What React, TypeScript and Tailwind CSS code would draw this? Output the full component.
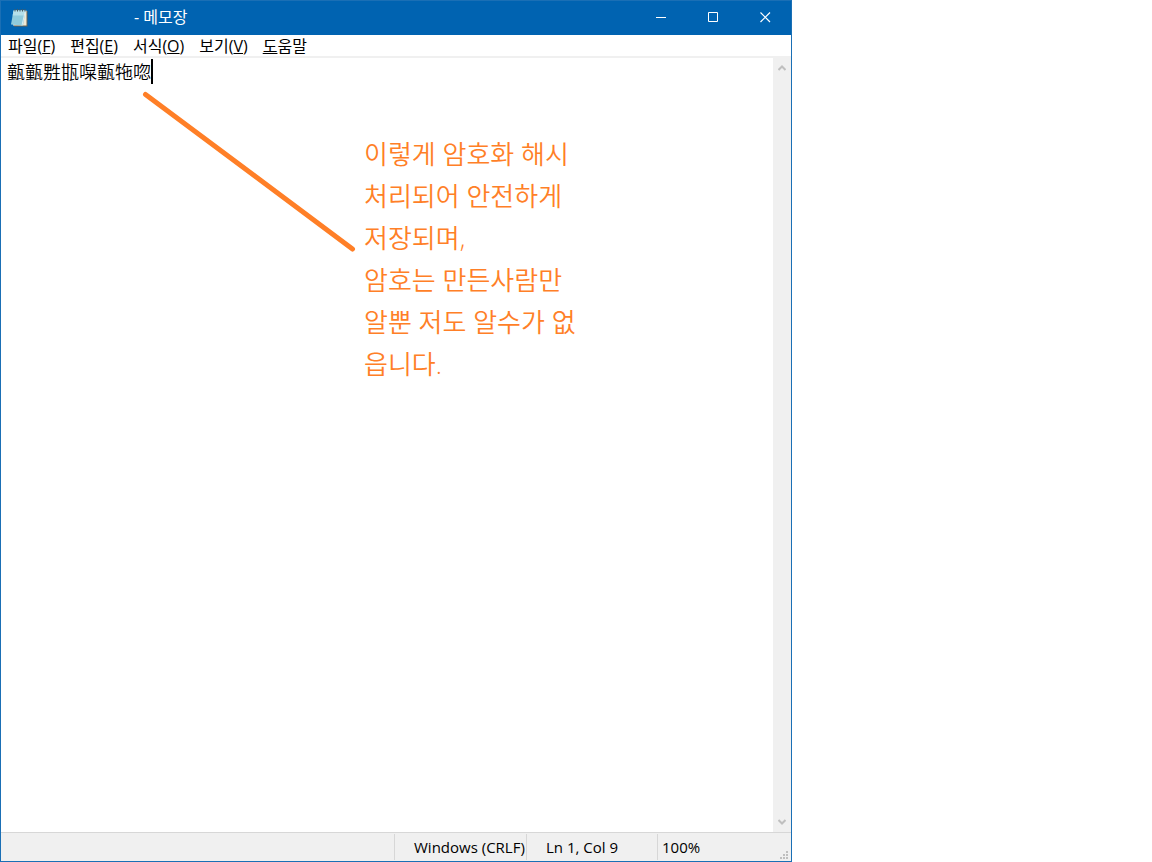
import { useState } from 'react';

const menus = [
  { label: '파일', mnemonic: 'F' },
  { label: '편집', mnemonic: 'E' },
  { label: '서식', mnemonic: 'O' },
  { label: '보기', mnemonic: 'V' },
];

const note = [
  '이렇게 암호화 해시',
  '처리되어 안전하게',
  '저장되며,',
  '암호는 만든사람만',
  '알뿐 저도 알수가 없',
  '읍니다.',
];

function NotepadIcon() {
  return (
    <svg className="h-5 w-5" viewBox="0 0 20 20" fill="none">
      <path d="M6 3h12.500v15.500H5z" fill="#6b6350" />
      <path d="M5 2.500h12.500v15H4z" fill="#efe9d6" />
      <path d="M4.500 2.500h12L14 17.500l-12-1z" fill="#8fcbdd" />
      <path d="M4.500 2.500h12l-.8 5H3.700z" fill="#b4dfea" />
      <path d="M13 17.300L16.300 3" stroke="#d8eef4" strokeWidth="1" />
      <path d="M6 1v2.500M8.500 1v2.500M11 1v2.500M13.500 1v2.500M16 1v2.500" stroke="#4a5a60" strokeWidth="1" />
    </svg>
  );
}

function TitleBar() {
  return (
    <header className="flex h-[34px] shrink-0 items-center bg-[#0063b1] text-white">
      <div className="flex flex-1 items-center pl-2">
        <NotepadIcon />
        <h1 className="pb-[2px] pl-[105px] text-base leading-5">- 메모장</h1>
      </div>
      <button aria-label="Minimize" className="flex h-full w-[52px] items-center justify-center pb-px">
        <svg className="h-[11px] w-[11px]" viewBox="0 0 11 11" stroke="white">
          <path d="M0 5.500h10" />
        </svg>
      </button>
      <button aria-label="Maximize" className="flex h-full w-[52px] items-center justify-center pb-px">
        <svg className="h-[11px] w-[11px]" viewBox="0 0 11 11" stroke="white" fill="none">
          <path d="M.5.5h9v9h-9z" />
        </svg>
      </button>
      <button aria-label="Close" className="flex h-full w-[52px] items-center justify-center pb-px">
        <svg className="h-[11px] w-[11px]" viewBox="0 0 11 11" stroke="white" strokeWidth="1.200">
          <path d="M.5.5l9.500 9.500M10 .5l-9.500 9.500" />
        </svg>
      </button>
    </header>
  );
}

function MenuBar() {
  return (
    <nav className="flex h-[23px] shrink-0 items-center gap-[15px] border-b-2 border-[#f0f0f0] bg-white pl-[7px] text-base leading-5">
      {menus.map((m) => (
        <button key={m.mnemonic}>
          {m.label}(<u>{m.mnemonic}</u>)
        </button>
      ))}
      <button>
        <u>도</u>움말
      </button>
    </nav>
  );
}

function ScrollBar() {
  return (
    <div className="flex w-[18px] shrink-0 flex-col justify-between bg-[#f0f0f0]">
      <button aria-label="Scroll up" className="flex h-5 items-center justify-center">
        <svg className="h-2 w-2" viewBox="0 0 8 8" fill="none" stroke="#bfbfbf" strokeWidth="2">
          <path d="M.5 6L4 2.500 7.500 6" />
        </svg>
      </button>
      <button aria-label="Scroll down" className="flex h-5 items-center justify-center">
        <svg className="h-2 w-2" viewBox="0 0 8 8" fill="none" stroke="#bfbfbf" strokeWidth="2">
          <path d="M.5 2L4 5.500 7.500 2" />
        </svg>
      </button>
    </div>
  );
}

function StatusBar() {
  return (
    <footer className="flex h-[29px] shrink-0 items-stretch border-t border-[#d7d7d7] bg-[#f0f0f0] text-[15px] leading-[26px]">
      <div className="flex-1" />
      <div className="my-px w-[132px] border-l border-[#d7d7d7] pl-[19px] whitespace-nowrap">Windows (CRLF)</div>
      <div className="my-px w-[131px] border-l border-[#d7d7d7] pl-[19px]">Ln 1, Col 9</div>
      <div className="my-px w-[121px] border-l border-[#d7d7d7] pl-1">100%</div>
      <svg className="mb-px h-[9px] w-[13px] self-end" viewBox="0 0 13 9" fill="#bfbfbf">
        <path d="M8 0h2v2H8zM5 3h2v2H5zM8 3h2v2H8zM2 6h2v2H2zM5 6h2v2H5zM8 6h2v2H8z" />
      </svg>
    </footer>
  );
}

export default function App() {
  const [text, setText] = useState('㼿㼿㽒㽍㘀㼿㸱唿');

  return (
    <div className="min-h-screen bg-white font-['Open_Sans','Noto_Sans_CJK_KR',sans-serif] text-black">
      <div className="flex h-screen w-11/16 flex-col border border-[#1a6fb5]">
        <TitleBar />
        <MenuBar />
        <main className="relative flex min-h-0 flex-1">
          <textarea
            aria-label="Text"
            className="flex-1 resize-none overflow-hidden bg-white px-[6px] font-['Noto_Sans_CJK_KR',sans-serif] text-[18px] leading-[26px] font-[350] outline-none"
            spellCheck={false}
            value={text}
            onChange={(e) => setText(e.target.value)}
          />
          <ScrollBar />
          <span className="absolute top-px left-[150px] h-[25px] w-[2px] bg-black" />
          <svg className="pointer-events-none absolute top-8 left-[140px] h-[164px] w-[218px]" viewBox="0 0 218 164">
            <path d="M4.500 4.500L211.500 159" stroke="#ff7f27" strokeWidth="5" strokeLinecap="round" />
          </svg>
          <div className="pointer-events-none absolute top-[75px] left-[363px] text-[26px] leading-[42px] font-[350] whitespace-nowrap text-[#ff7f27]">
            {note.map((line) => (
              <p key={line}>{line}</p>
            ))}
          </div>
        </main>
        <StatusBar />
      </div>
    </div>
  );
}
